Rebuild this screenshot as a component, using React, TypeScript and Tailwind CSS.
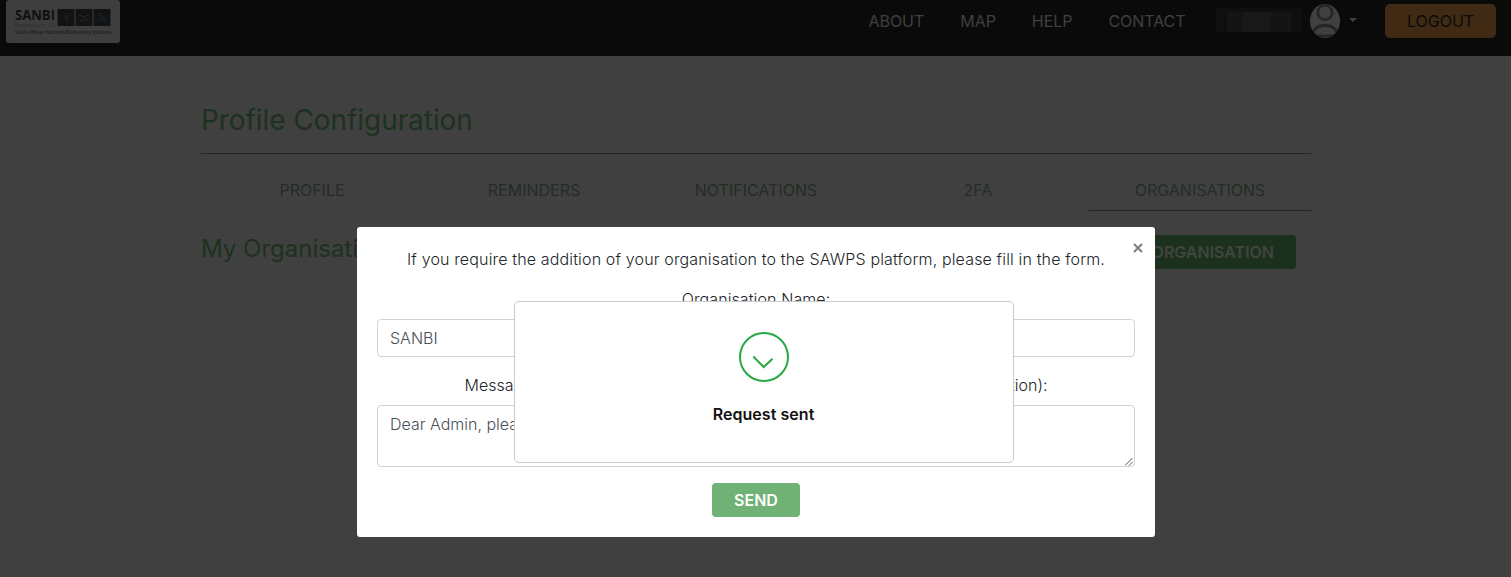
const tabs = ["PROFILE", "REMINDERS", "NOTIFICATIONS", "2FA", "ORGANISATIONS"];

function Logo() {
  return (
    <div className="ml-1.5 h-[43px] w-[114px] rounded-[3px] bg-[#3e3e3e] pl-[5px] pt-1">
      <svg className="overflow-visible" width="106" height="37" viewBox="-4 -5 106 37">
        <text x="0" y="11" fontFamily="Open Sans, sans-serif" fontWeight="700" fontSize="14" textLength="40" lengthAdjust="spacingAndGlyphs" fill="#101010">SANBI</text>
        <text x="0" y="17.5" fontFamily="Open Sans, sans-serif" fontSize="5" textLength="40" lengthAdjust="spacingAndGlyphs" fill="#293229">Biodiversity for Life</text>
        <text x="0" y="25" fontFamily="Open Sans, sans-serif" fontWeight="600" fontSize="4.6" textLength="96" lengthAdjust="spacingAndGlyphs" fill="#1c1c1c">South African National Biodiversity Institute</text>
        <path d="M42.500 0h17v17h-17zM60.500 0h17v17h-17zM78.500 0h17v17h-17z" fill="#121314" />
        <path d="M51 4l2 4-2 6M49 7l4 2M64 6l6 2 4-3M65 12l6-2 4 3" stroke="#2a241c" fill="none" />
        <path d="M83 4l3 4 5 2M84 10l7 3" stroke="#22282b" fill="none" />
      </svg>
    </div>
  );
}

function Header() {
  return (
    <header className="flex h-14 items-start bg-[#0a0a0a] text-base text-[#404040]">
      <Logo />
      <nav className="ml-auto flex gap-9 pt-[9px] tracking-[-0.05px]">
        <span>ABOUT</span>
        <span>MAP</span>
        <span>HELP</span>
        <span>CONTACT</span>
      </nav>
      <div className="ml-[30.500px] mt-2 flex h-6 w-[87px] overflow-hidden bg-[#0e0f0e]">
        <div className="ml-[11px] mt-1 h-5 w-4 bg-[#131413]" />
        <div className="mt-1 h-5 w-7 bg-[#171817]" />
        <div className="mt-1 h-5 w-5 bg-[#131413]" />
      </div>
      <svg className="ml-[7px] mt-1" width="30" height="34" viewBox="0 0 30 34">
        <defs>
          <clipPath id="avatar">
            <ellipse cx="15" cy="17" rx="15" ry="17" />
          </clipPath>
        </defs>
        <g clipPath="url(#avatar)">
          <path d="M0 0h30v34H0z" fill="#404040" />
          <circle cx="15" cy="8.500" r="7.200" fill="none" stroke="#252525" strokeWidth="2.600" />
          <path d="M2 32c1-7 6-10.500 13-10.500S27 25 28 32z" fill="none" stroke="#252525" strokeWidth="2.800" />
        </g>
      </svg>
      <svg className="ml-[9px] mt-[18px]" width="8" height="4" viewBox="0 0 8 4">
        <path d="M0 0h8L4 4z" fill="#404040" />
      </svg>
      <button className="ml-7 mr-[15px] mt-1 h-[34px] w-[111px] rounded-[5px] bg-[#402a14] text-[#0a0a0a]">LOGOUT</button>
    </header>
  );
}

function RequestForm() {
  return (
    <div className="absolute left-[357px] top-[227px] flex h-[310px] w-[798px] flex-col rounded-[3px] bg-white px-5 pt-5 text-base font-light text-[#212529]">
      <p className="text-center tracking-[0.15px]">If you require the addition of your organisation to the SAWPS platform, please fill in the form.</p>
      <p className="mt-4 text-center tracking-[0.1px]">Organisation Name:</p>
      <div className="mt-2 h-[38px] rounded border border-[#ced4da] px-3 py-1.5 text-[#495057]">SANBI</div>
      <p className="mt-4 flex justify-between px-[87.500px]">
        <span>Message</span>
        <span>(motivation):</span>
      </p>
      <div className="relative mt-2 h-[62px] rounded border border-[#ced4da] px-3 py-1.5 text-[#495057]">
        Dear Admin, please
        <svg className="absolute bottom-0 right-px" width="8" height="8" viewBox="0 0 8 8">
          <path d="M0 7.500L7.500 0M4 7.500L7.500 4" stroke="#555" fill="none" />
        </svg>
      </div>
      <button className="mx-auto mt-4 h-[34px] w-[88px] rounded bg-[#70b276] font-semibold text-white">SEND</button>
      <svg className="absolute right-3 top-4" width="10" height="10" viewBox="0 0 10 10">
        <path d="M1 1l8 8M9 1L1 9" stroke="#7f7f7f" strokeWidth="2" />
      </svg>
    </div>
  );
}

function SuccessMessage() {
  return (
    <div className="absolute left-[514px] top-[301px] flex h-[162px] w-[500px] flex-col items-center rounded-[5px] border border-[#c8cacc] bg-white pt-[30px]">
      <svg width="50" height="50" viewBox="0 0 50 50">
        <circle cx="25" cy="25" r="24" fill="none" stroke="#28a745" strokeWidth="2" />
        <path d="M14.300 24.500L24.700 35l8.800-8.300" fill="none" stroke="#28a745" strokeWidth="2" />
      </svg>
      <p className="mr-px mt-5 text-base font-semibold tracking-[0.05px] text-[#111]">Request sent</p>
    </div>
  );
}

export default function App() {
  return (
    <div className="relative h-[577px] w-[1511px] overflow-hidden bg-[#404040] font-['Inter',sans-serif]">
      <Header />
      <main className="ml-[201px] w-[1110px] text-[#1d311f]">
        <h1 className="flex h-[98px] items-end border-b border-[#1e281f] pb-[15px] text-[28px] leading-9 tracking-[-0.06px]">Profile Configuration</h1>
        <div className="grid h-[57px] grid-cols-5 text-center text-base text-[#242d25]">
          {tabs.map((tab) => (
            <div key={tab} className={`pt-6 ${tab === "ORGANISATIONS" ? "border-b border-[#1e281f]" : ""}`}>{tab}</div>
          ))}
        </div>
        <div className="flex items-start justify-between pr-[15px] pt-6">
          <h2 className="text-2xl leading-7">My Organisations</h2>
          <button className="h-[34px] rounded bg-[#1c301e] px-[22px] text-base font-semibold text-[#404540]">ADD ORGANISATION</button>
        </div>
      </main>
      <RequestForm />
      <SuccessMessage />
    </div>
  );
}
